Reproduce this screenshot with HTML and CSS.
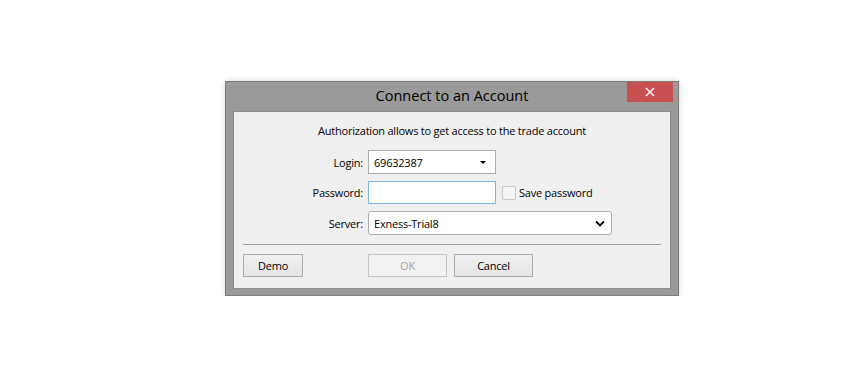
FILE: index.html
```html
<!DOCTYPE html>
<html>
<head>
<meta charset="utf-8">
<link rel="stylesheet" href="styles.css">
</head>
<body>
<div class="window">
  <div class="titlebar">
    <div class="title">Connect to an Account</div>
    <div class="close"><svg width="10" height="10" viewBox="0 0 10 10"><path d="M1 1L9 9M9 1L1 9" stroke="#fff" stroke-width="1.4" fill="none"/></svg></div>
  </div>
  <div class="panel">
    <div class="intro">Authorization allows to get access to the trade account</div>
    <div class="form">
      <div class="label">Login:</div>
      <div class="field login"><span class="value">69632387</span><span class="tri"></span></div>
      <div class="extra"></div>
      <div class="label">Password:</div>
      <div class="field password"></div>
      <div class="extra"><span class="check"></span><span class="checklabel">Save password</span></div>
      <div class="label">Server:</div>
      <div class="field server"><span class="value">Exness-Trial8</span><svg class="chev" width="10" height="7" viewBox="0 0 10 7"><path d="M1 1.5L5 5.5L9 1.5" stroke="#000" stroke-width="1.8" fill="none"/></svg></div>
    </div>
    <div class="sep"></div>
    <div class="buttons">
      <div class="btn demo">Demo</div>
      <div class="btn ok disabled">OK</div>
      <div class="btn cancel">Cancel</div>
    </div>
  </div>
</div>
</body>
</html>
```
FILE: styles.css
```css
html, body {
  margin: 0;
  padding: 0;
  background: #ffffff;
}
body {
  font-family: "Open Sans", "Noto Sans", sans-serif;
  font-size: 11px;
  letter-spacing: -0.22px;
  color: #000;
  padding: 81px 0 0 225px;
}
.window {
  width: 454px;
  height: 215px;
  box-sizing: border-box;
  border: 1px solid #7d7d7d;
  background: #9a9a9a;
  padding: 0 7px 6px 7px;
  position: relative;
  box-shadow: 0 0 6px rgba(0,0,0,0.18);
}
.titlebar {
  height: 29px;
  display: flex;
  align-items: center;
  justify-content: center;
}
.title {
  font-size: 14.5px;
  letter-spacing: 0;
  color: #000;
  margin-bottom: 3px;
}
.close {
  position: absolute;
  top: 0;
  right: 5px;
  width: 46px;
  height: 20px;
  background: #c75050;
  display: flex;
  align-items: center;
  justify-content: center;
}
.panel {
  height: 178px;
  box-sizing: border-box;
  background: #f0f0f0;
  border: 1px solid #8c8c8c;
  padding: 0 9px;
}
.intro {
  text-align: center;
  height: 16px;
  line-height: 16px;
  margin-top: 11px;
}
.form {
  margin-top: 11px;
  display: grid;
  grid-template-columns: 120px 128px auto;
  column-gap: 5px;
  row-gap: 7px;
  align-items: center;
}
.label {
  text-align: right;
}
.field {
  height: 24px;
  box-sizing: border-box;
  background: #fff;
  border: 1px solid #abadb3;
  display: flex;
  align-items: center;
  padding: 0 6px 0 5px;
}
.field .value {
  flex: 1;
}
.password {
  height: 23px;
  border-color: #7eb4ea;
}
.tri {
  width: 0;
  height: 0;
  border-left: 3px solid transparent;
  border-right: 3px solid transparent;
  border-top: 3px solid #000;
  margin-right: 3px;
}
.server {
  grid-column: 2 / span 2;
  width: 244px;
  border-color: #acacac;
  border-radius: 3px;
}
.extra {
  display: flex;
  align-items: center;
  gap: 3px;
  padding-left: 1px;
}
.check {
  width: 12px;
  height: 12px;
  border: 1px solid #c9c9c9;
  background: #f4f4f4;
  border-radius: 1px;
}
.sep {
  margin-top: 9px;
  height: 1px;
  background: #a0a0a0;
}
.buttons {
  margin-top: 9px;
  display: flex;
  gap: 7px;
}
.btn {
  height: 23px;
  box-sizing: border-box;
  border: 1px solid #acacac;
  background: linear-gradient(#f0f0f0, #e5e5e5);
  display: flex;
  align-items: center;
  justify-content: center;
  width: 79px;
}
.demo {
  width: 60px;
  margin-right: 58px;
}
.disabled {
  border-color: #c4c4c4;
  background: #f2f2f2;
  color: #a3a3a3;
}
```
